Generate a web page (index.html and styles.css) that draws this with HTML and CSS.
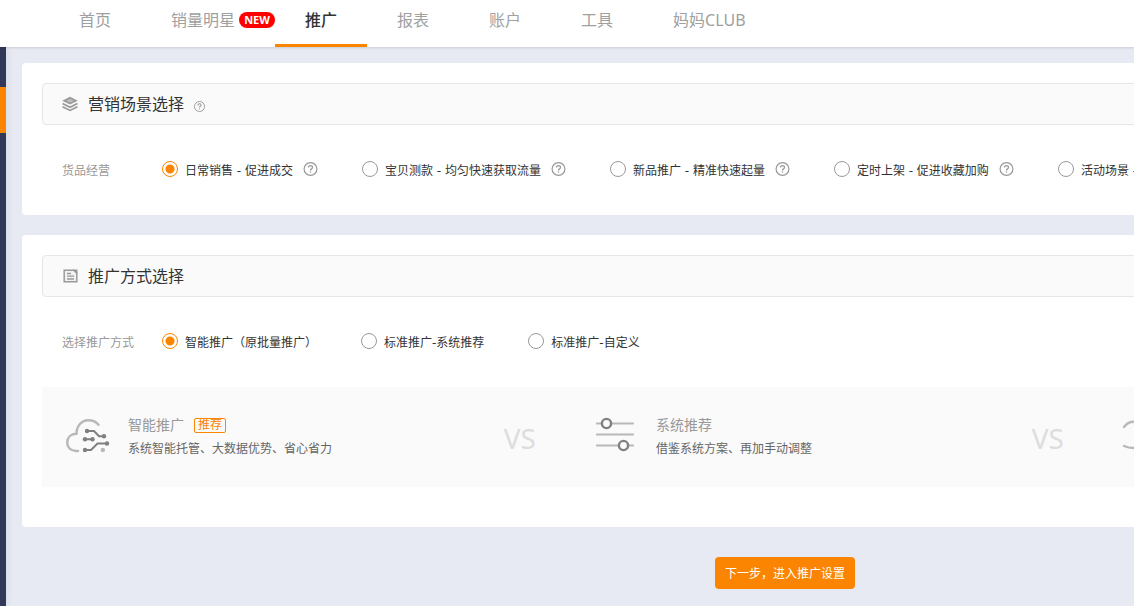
FILE: index.html
```html
<!DOCTYPE html>
<html lang="zh-CN">
<head>
<meta charset="utf-8">
<title>推广</title>
<link rel="stylesheet" href="styles.css">
</head>
<body>
<svg class="defs" aria-hidden="true">
  <symbol id="help" viewBox="0 0 14 14">
    <circle cx="7" cy="7" r="6.4" fill="none" stroke="currentColor" stroke-width="1.2"/>
    <path d="M5 5.6C5 4.3 5.8 3.6 7 3.6S9 4.3 9 5.4C9 6.6 7 6.8 7 8.4" fill="none" stroke="currentColor" stroke-width="1.3"/>
    <rect x="6.4" y="9.4" width="1.2" height="1.3" fill="currentColor"/>
  </symbol>
</svg>

<header class="topbar">
  <nav class="nav">
    <a class="nav-link" href="#">首页</a>
    <a class="nav-link nav-link-new" href="#">销量明星<span class="new">NEW</span></a>
    <a class="nav-link active" href="#">推广</a>
    <a class="nav-link" href="#">报表</a>
    <a class="nav-link" href="#">账户</a>
    <a class="nav-link" href="#">工具</a>
    <a class="nav-link" href="#">妈妈CLUB</a>
  </nav>
</header>

<div class="layout">
  <aside class="rail"><div class="rail-active"></div></aside>
  <main class="content">
    <section class="panel panel-scene">
      <h2 class="panel-title">
        <svg class="title-icon" viewBox="0 0 16 16" aria-hidden="true">
          <path d="M8 .8 15.800 4.700 8 8.600.2 4.700Z" fill="#999"/>
          <path d="M8 2.800 12 4.800 8 6.800 4 4.800Z" fill="#bbb"/>
          <path d="M.5 7.600 8 11.300l7.500-3.700M.5 10.700 8 14.400l7.500-3.700" fill="none" stroke="#999" stroke-width="1.700"/>
        </svg>
        营销场景选择
        <svg class="help-small" role="img" aria-label="帮助"><use href="#help"/></svg>
      </h2>
      <div class="field" role="radiogroup" aria-labelledby="scene-label">
        <span class="field-label" id="scene-label">货品经营</span>
        <div class="options">
          <div class="option"><input type="radio" name="scene" id="s1" checked><label for="s1">日常销售 - 促进成交</label><svg class="help" role="img" aria-label="帮助"><use href="#help"/></svg></div>
          <div class="option"><input type="radio" name="scene" id="s2"><label for="s2">宝贝测款 - 均匀快速获取流量</label><svg class="help" role="img" aria-label="帮助"><use href="#help"/></svg></div>
          <div class="option"><input type="radio" name="scene" id="s3"><label for="s3">新品推广 - 精准快速起量</label><svg class="help" role="img" aria-label="帮助"><use href="#help"/></svg></div>
          <div class="option"><input type="radio" name="scene" id="s4"><label for="s4">定时上架 - 促进收藏加购</label><svg class="help" role="img" aria-label="帮助"><use href="#help"/></svg></div>
          <div class="option"><input type="radio" name="scene" id="s5"><label for="s5">活动场景 -</label></div>
        </div>
      </div>
    </section>

    <section class="panel panel-mode">
      <h2 class="panel-title">
        <svg class="title-icon" viewBox="0 0 16 16" aria-hidden="true">
          <path d="M2.200 2.200h9.600l3 3v8.600H2.200Z" fill="#f2f2f2" stroke="#999" stroke-width="1.500"/>
          <path d="M11 1.500h4.500V6Z" fill="#999"/>
          <path d="M5 5.500h4M5 8.200h7M5 11h7" stroke="#999" stroke-width="1.300"/>
        </svg>
        推广方式选择
      </h2>
      <div class="field" role="radiogroup" aria-labelledby="mode-label">
        <span class="field-label" id="mode-label">选择推广方式</span>
        <div class="options">
          <div class="option"><input type="radio" name="mode" id="m1" checked><label for="m1">智能推广（原批量推广）</label></div>
          <div class="option"><input type="radio" name="mode" id="m2"><label for="m2">标准推广-系统推荐</label></div>
          <div class="option"><input type="radio" name="mode" id="m3"><label for="m3">标准推广-自定义</label></div>
        </div>
      </div>
      <div class="compare">
        <div class="mode">
          <svg class="mode-icon" viewBox="0 0 44 36" aria-hidden="true">
            <path d="M12 34H10C4.500 34 1.200 30.200 1.200 25.500C1.200 20.500 4.800 17 10.500 16.800C10.500 9 15.500 3.200 22.500 3.200C27 3.200 30.200 4.800 32.500 7.800" fill="none" stroke="#b8b8b8" stroke-width="2.400" stroke-linecap="round"/>
            <g fill="none" stroke="#808080" stroke-width="2"><path d="M21 14h7l5 5.300h5M19 22.300h7.500M19 33h6l6.500-6.500H41"/></g>
            <g fill="#808080"><circle cx="21" cy="14" r="2.200"/><circle cx="38" cy="19.300" r="2.200"/><circle cx="19" cy="22.300" r="2.200"/><circle cx="26.500" cy="22.300" r="2.200"/><circle cx="19" cy="33" r="2.200"/><circle cx="41" cy="26.500" r="2.200"/></g>
            <circle cx="36.800" cy="33" r="2.200" fill="#b8b8b8"/>
          </svg>
          <div class="mode-text">
            <h3>智能推广<span class="tag">推荐</span></h3>
            <p>系统智能托管、大数据优势、省心省力</p>
          </div>
          <span class="vs">VS</span>
        </div>
        <div class="mode">
          <svg class="mode-icon" viewBox="0 0 44 36" aria-hidden="true">
            <path d="M3 6.500h36M3 17.500h36M3 28.500h36" stroke="#b8b8b8" stroke-width="2.200" stroke-linecap="round"/>
            <circle cx="12.500" cy="6.500" r="4.600" fill="#fafafa" stroke="#808080" stroke-width="2.400"/>
            <circle cx="29.500" cy="28.500" r="4.600" fill="#fafafa" stroke="#808080" stroke-width="2.400"/>
          </svg>
          <div class="mode-text">
            <h3>系统推荐</h3>
            <p>借鉴系统方案、再加手动调整</p>
          </div>
          <span class="vs">VS</span>
        </div>
        <div class="mode">
          <svg class="mode-icon" viewBox="0 0 44 36" aria-hidden="true">
            <path d="M2 10C5 6.500 7 4.800 12 4.800M2 29C6 30.800 9 31.200 13 31" fill="none" stroke="#b8b8b8" stroke-width="2.400" stroke-linecap="round"/>
          </svg>
        </div>
      </div>
    </section>

    <div class="actions"><button class="next" type="button">下一步，进入推广设置</button></div>
  </main>
</div>
</body>
</html>
```
FILE: styles.css
```css
* { box-sizing: border-box; }

body {
  margin: 0;
  min-height: 100vh;
  display: flex;
  flex-direction: column;
  overflow: hidden;
  background: #e7eaf3;
  color: #333;
  font: 12px/20px "DejaVu Sans", "Noto Sans CJK SC", sans-serif;
}

h2, h3, p { margin: 0; font-weight: 400; }
.defs { display: none; }

.topbar {
  position: relative;
  background: #fff;
  box-shadow: 0 1px 2px rgba(0, 0, 0, .12);
}

.nav {
  display: flex;
  padding-left: 49px;
  font: 16px/40px "Noto Sans", "Noto Sans CJK SC", sans-serif;
}

.nav-link {
  display: flex;
  align-items: center;
  padding: 0 30px 4px;
  border-bottom: 3px solid transparent;
  color: #a0a0a0;
  text-decoration: none;
  white-space: nowrap;
}
.nav-link.active { border-color: #fb8500; color: #333; font-weight: 500; }
.nav-link-new { padding-right: 0; gap: 4px; }

.new {
  width: 36px;
  border-radius: 8px;
  background: #f00;
  color: #fff;
  font: 700 11px/16px "Open Sans", sans-serif;
  text-align: center;
}

.layout { flex: 1; display: flex; }

.rail {
  flex: 0 0 6px;
  padding-top: 40px;
  background: #323857;
  box-shadow: 0 0 8px rgba(0, 0, 0, .1);
}
.rail-active { height: 46px; background: #fb8500; }

/* Wide workspace: runs past the right edge of small windows */
.content {
  flex: 1 0 auto;
  min-width: 1558px;
  padding: 16px;
  display: flex;
  flex-direction: column;
  gap: 20px;
}

.panel {
  padding: 20px;
  border-radius: 4px;
  background: #fff;
}
.panel-scene { padding-bottom: 0; }
.panel-mode { padding-bottom: 40px; }

.panel-title {
  display: flex;
  align-items: center;
  padding: 2px 19px 0;
  border: 1px solid #e6e6e6;
  border-radius: 4px;
  background: #fafafa;
  font-size: 16px;
  line-height: 38px;
}
.title-icon { width: 16px; height: 16px; margin: 0 10px 2px 0; }
.help-small { width: 11px; height: 11px; margin: 3px 0 0 10px; color: #999; }

.field {
  display: flex;
  align-items: center;
  padding: 36px 20px 34px;
}
.field-label { width: 100px; color: #999; }
.options { display: flex; gap: 44px; }
.option { display: flex; align-items: center; white-space: nowrap; }

.option input {
  appearance: none;
  width: 16px;
  height: 16px;
  margin: 0 7px 4px 0;
  border: 1px solid #999;
  border-radius: 50%;
  background: #fff;
}
.option input:checked {
  border-color: #fb8500;
  background: radial-gradient(circle, #fb8500 4px, #fff 5px);
}

.help { width: 15px; height: 14px; margin: 0 0 4px 10px; color: #999; }

.compare {
  display: flex;
  background: #fafafa;
}
.mode {
  flex: 0 0 528px;
  display: flex;
  align-items: flex-start;
  padding: 27px 34px 25px 24px;
}
.mode:last-child { flex: 1; }
.mode-icon { width: 44px; height: 36px; margin: 3px 18px 0 0; }
.mode-text { flex: 1; }
.mode h3 {
  display: flex;
  align-items: center;
  gap: 10px;
  color: #999;
  font-size: 14px;
  line-height: 22px;
}
.mode p { color: #666; line-height: 26px; }

.tag {
  padding: 0 3px;
  border: 1px solid #fb8500;
  border-radius: 2px;
  color: #fb8500;
  font-size: 12px;
  line-height: 13px;
}

.vs {
  padding-top: 4px;
  color: #ddd;
  font: 28px/40px "Noto Sans", sans-serif;
}

.actions { display: flex; justify-content: center; padding-top: 10px; }

.next {
  width: 140px;
  padding: 2px 0 0;
  border: 0;
  border-radius: 4px;
  background: #fb8500;
  color: #fff;
  font: inherit;
  line-height: 30px;
  white-space: nowrap;
}
```
